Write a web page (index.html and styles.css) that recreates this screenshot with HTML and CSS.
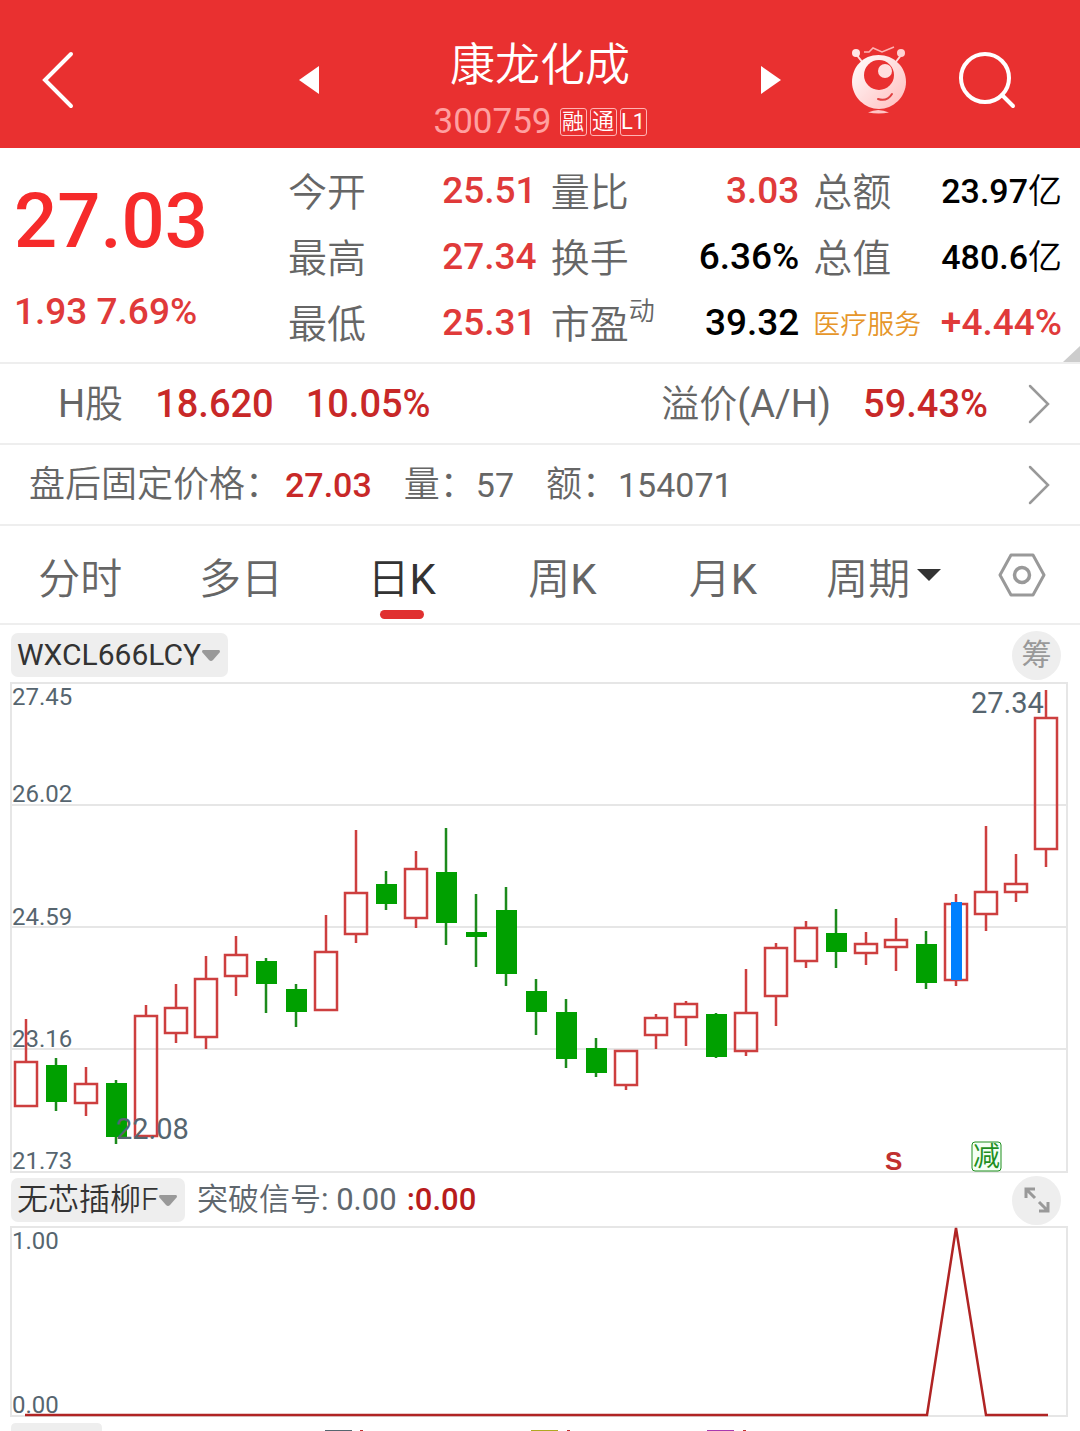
FILE: index.html
```html
<!DOCTYPE html>
<html lang="zh-CN">
<head>
  <meta charset="UTF-8" />
  <meta name="viewport" content="width=device-width, initial-scale=1.0"/>
  <title>康龙化成 300759</title>
  <link rel="stylesheet" href="styles.css">
</head>
<body>
  <header class="header">
    <div class="header-left">
      <button class="icon-btn" aria-label="返回">
        <svg width="32" height="58" viewBox="0 0 32 58"><path d="M29 3 3 29 29 55" fill="none" stroke="#fff" stroke-width="4" stroke-linecap="round"/></svg>
      </button>
      <button class="icon-btn" aria-label="上一只">
        <svg width="20" height="28" viewBox="0 0 20 28"><path d="M20 0v28L0 14z" fill="#fff"/></svg>
      </button>
    </div>
    <div class="header-title">
      <h1>康龙化成</h1>
      <div class="header-code">
        <span class="code">300759</span>
        <span class="tag">融</span>
        <span class="tag">通</span>
        <span class="tag en">L1</span>
      </div>
    </div>
    <div class="header-right">
      <button class="icon-btn" aria-label="下一只">
        <svg width="20" height="28" viewBox="0 0 20 28"><path d="M0 0v28L20 14z" fill="#fff"/></svg>
      </button>
      <button class="icon-btn robot" aria-label="智能助手">
        <svg width="56" height="68" viewBox="0 0 56 68">
          <defs>
            <linearGradient id="skin" x1="0" y1="0" x2="1" y2="1">
              <stop offset="0" stop-color="#fff"/>
              <stop offset="1" stop-color="#ffbcbc"/>
            </linearGradient>
          </defs>
          <path d="M5 8 12 17M51 8 44 17" stroke="#ffdcdc" stroke-width="2"/>
          <circle cx="5" cy="7" r="4" fill="#ffe6e6"/>
          <circle cx="50" cy="7" r="4" fill="#ffd2d2"/>
          <path d="M13 6h5l4-4 9 4 12-5" fill="none" stroke="#ffb4b4" stroke-width="1.5"/>
          <path d="M27.500 9C43 9 55 21 55 36 55 51 42 63 28 63S1 51 1 36C1 21 12 9 27.500 9z" fill="url(#skin)"/>
          <circle cx="28" cy="29" r="15" fill="#e93030"/>
          <circle cx="34" cy="25" r="7" fill="#ffdede"/>
          <path d="M27 53q9 3 14-5" fill="none" stroke="#e04040" stroke-width="2" stroke-linecap="round"/>
          <path d="M17 66.500q10-5 21 0-10 2-21 0z" fill="#ffc4c4"/>
        </svg>
      </button>
      <button class="icon-btn" aria-label="搜索">
        <svg width="58" height="58" viewBox="0 0 58 58"><g fill="none" stroke="#fff" stroke-width="4" stroke-linecap="round"><circle cx="27" cy="27" r="24"/><path d="M44 44 55 55"/></g></svg>
      </button>
    </div>
  </header>

  <section class="quote">
    <div class="price">
      <div class="price-now">27.03</div>
      <div class="price-change">1.93 7.69%</div>
    </div>
    <dl class="stats">
      <div class="stat"><dt>今开</dt><dd class="up">25.51</dd></div>
      <div class="stat"><dt>量比</dt><dd class="up">3.03</dd></div>
      <div class="stat"><dt>总额</dt><dd class="amount">23.97<span>亿</span></dd></div>
      <div class="stat"><dt>最高</dt><dd class="up">27.34</dd></div>
      <div class="stat"><dt>换手</dt><dd>6.36%</dd></div>
      <div class="stat"><dt>总值</dt><dd class="amount">480.6<span>亿</span></dd></div>
      <div class="stat"><dt>最低</dt><dd class="up">25.31</dd></div>
      <div class="stat"><dt>市盈<sup>动</sup></dt><dd>39.32</dd></div>
      <div class="stat"><dt class="sector">医疗服务</dt><dd class="up">+4.44%</dd></div>
    </dl>
    <svg class="corner" width="17" height="16" viewBox="0 0 17 16"><path d="M17 0v16H0z" fill="#ccc"/></svg>
  </section>

  <a class="row row-h" href="#">
    <span><span class="en">H</span>股</span>
    <b>18.620</b>
    <b>10.05%</b>
    <span class="push">溢价<span class="en">(A/H)</span></span>
    <b>59.43%</b>
    <svg class="arrow" width="22" height="40" viewBox="0 0 22 40"><path d="M2 2 20 20 2 38" fill="none" stroke="#999" stroke-width="2.500" stroke-linecap="round"/></svg>
  </a>
  <a class="row row-after" href="#">
    <span>盘后固定价格：<b>27.03</b></span>
    <span>量：<i>57</i></span>
    <span>额：<i>154071</i></span>
    <svg class="arrow push" width="22" height="40" viewBox="0 0 22 40"><path d="M2 2 20 20 2 38" fill="none" stroke="#999" stroke-width="2.500" stroke-linecap="round"/></svg>
  </a>

  <nav class="tabs">
    <button class="tab">分时</button>
    <button class="tab">多日</button>
    <button class="tab active"><span>日<span class="en">K</span></span></button>
    <button class="tab"><span>周<span class="en">K</span></span></button>
    <button class="tab"><span>月<span class="en">K</span></span></button>
    <button class="tab">周期<svg width="24" height="12" viewBox="0 0 24 12"><path d="M0 0h24L12 12z" fill="#333"/></svg></button>
    <button class="setting" aria-label="设置">
      <svg width="48" height="44" viewBox="0 0 48 44"><g fill="none" stroke="#999" stroke-linejoin="round"><path d="M13 2h22L46 22 35 42H13L2 22z" stroke-width="3"/><circle cx="24" cy="22" r="7.500" stroke-width="3.500"/></g></svg>
    </button>
  </nav>

  <div class="toolbar toolbar-main">
    <div class="picker en">
      <select aria-label="主图指标"><option>WXCL666LCY</option></select>
      <svg width="18" height="11" viewBox="0 0 18 11"><path d="M1 0h16q1 0 1 2L11 10q-2 2-4 0L0 2Q0 0 1 0z" fill="#999"/></svg>
    </div>
    <button class="round">筹</button>
  </div>
  <svg class="chart" id="kline" viewBox="0 0 1056 490">
    <g class="grid">
      <path d="M0 122H1056M0 244H1056M0 366H1056"/>
      <rect x="0" y="0" width="1056" height="489"/>
    </g>
    <g class="axis">
      <text x="1" y="22">27.45</text>
      <text x="1" y="119">26.02</text>
      <text x="1" y="242">24.59</text>
      <text x="1" y="364">23.16</text>
      <text x="1" y="486">21.73</text>
    </g>
    <g id="candles"></g>
    <rect x="940" y="219" width="11" height="78" fill="#0080ff"/>
    <g class="peak">
      <text x="960" y="30">27.34</text>
      <text x="105" y="456">22.08</text>
    </g>
    <text class="sell" x="874" y="487">S</text>
    <rect class="cut-box" x="961" y="459" width="29" height="29" rx="3"/>
    <text class="cut" x="962" y="483">减</text>
  </svg>

  <div class="toolbar">
    <div class="picker">
      <select aria-label="副图指标"><option>无芯插柳F</option></select>
      <svg width="18" height="11" viewBox="0 0 18 11"><path d="M1 0h16q1 0 1 2L11 10q-2 2-4 0L0 2Q0 0 1 0z" fill="#999"/></svg>
    </div>
    <span class="signal">突破信号<span class="en">: 0.00</span></span>
    <span class="signal-red">:0.00</span>
    <button class="round" aria-label="展开">
      <svg width="28" height="28" viewBox="0 0 28 28"><path d="M12 3H3v9M3 3l9 9M25 16v9h-9M25 25l-9-9" fill="none" stroke="#999" stroke-width="3"/></svg>
    </button>
  </div>
  <svg class="chart" viewBox="0 0 1056 190">
    <g class="grid"><rect x="0" y="0" width="1056" height="189"/></g>
    <g class="axis">
      <text x="1" y="22">1.00</text>
      <text x="1" y="186">0.00</text>
    </g>
    <path class="line" d="M14 188H916L945 1 975 188H1037"/>
  </svg>

  <!-- top edge of the next indicator row -->
  <svg class="next" viewBox="0 0 1080 15">
    <path d="M11 15v-4q0-5 5-5h81q5 0 5 5v4z" fill="#eee"/>
    <path d="M325 14h27" stroke="#56656f" stroke-width="2"/>
    <path d="M531 14h27" stroke="#b0a820" stroke-width="2"/>
    <path d="M707 14h27" stroke="#a83ab0" stroke-width="2"/>
    <path d="M360 14h3M567 14h3M743 14h3" stroke="#c03030" stroke-width="2"/>
  </svg>

  <script>
    // [high, body top, body bottom, low, up]
    const candles = [
      [336, 379, 423, 423, 1], [375, 382, 419, 428, 0], [384, 401, 420, 433, 1], [397, 400, 454, 461, 0],
      [322, 333, 453, 453, 1], [301, 325, 350, 360, 1], [273, 296, 354, 366, 1], [253, 272, 293, 313, 1],
      [275, 278, 301, 330, 0], [301, 306, 329, 344, 0], [232, 269, 327, 327, 1], [147, 210, 251, 260, 1],
      [188, 201, 221, 227, 0], [168, 186, 235, 245, 1], [145, 189, 240, 262, 0], [211, 249, 254, 284, 0],
      [204, 227, 291, 303, 0], [296, 308, 329, 352, 0], [316, 329, 376, 385, 0], [355, 365, 390, 394, 0],
      [368, 368, 402, 407, 1], [331, 335, 352, 366, 1], [318, 321, 334, 363, 1], [330, 331, 374, 375, 0],
      [286, 330, 368, 373, 1], [260, 265, 313, 343, 1], [238, 245, 278, 285, 1], [226, 250, 269, 285, 0],
      [249, 261, 270, 282, 1], [235, 257, 264, 288, 1], [248, 261, 300, 306, 0], [211, 221, 297, 303, 1],
      [143, 209, 231, 248, 1], [171, 201, 209, 219, 1], [7, 35, 166, 184, 1]
    ];
    const step = 30;
    let svg = "";
    candles.forEach(([high, top, bottom, low, up], i) => {
      const x = 15 + i * step;
      const cls = up ? "rise" : "fall";
      svg += `<path class="${cls}" d="M${x} ${high}V${top}M${x} ${bottom}V${low}"/>`;
      svg += up
        ? `<rect class="rise" x="${x - 11}" y="${top}" width="22" height="${bottom - top}"/>`
        : `<rect class="fall-body" x="${x - 10}" y="${top}" width="21" height="${bottom - top}"/>`;
    });
    document.getElementById("candles").innerHTML = svg;
  </script>
</body>
</html>
```
FILE: styles.css
```css
* {
  box-sizing: border-box;
}
body {
  margin: 0;
  background: #fff;
  color: #666;
  font-family: Roboto, "Noto Sans CJK SC", sans-serif;
  font-weight: 350;
}
button,
select {
  border: 0;
  padding: 0;
  background: none;
  color: inherit;
  font: inherit;
}
svg {
  display: block;
}
.en {
  font-weight: 400;
}

/* header */
.header {
  display: grid;
  grid-template-columns: 1fr auto 1fr;
  align-items: center;
  height: 148px;
  padding: 12px 42px 0;
  background: #e93030;
  color: #fff;
}
.header-left,
.header-right {
  display: flex;
  align-items: center;
  justify-content: space-between;
}
.header-left {
  padding-right: 114px;
}
.header-right {
  padding: 0 22px 0 114px;
}
.robot {
  margin-left: 20px;
}
.header-title {
  padding-top: 24px;
  text-align: center;
}
h1 {
  margin: 0;
  font-size: 45px;
  line-height: 60px;
  font-weight: 350;
}
.header-code {
  display: flex;
  align-items: center;
  gap: 3px;
}
.code {
  margin-right: 5px;
  color: #ffa0a0;
  font-size: 35px;
  line-height: 52px;
  font-weight: 400;
}
.tag {
  width: 27px;
  height: 28px;
  border: 1px solid #ffb4b4;
  border-radius: 3px;
  font-size: 22px;
  line-height: 26px;
}

/* quote */
.quote {
  position: relative;
  display: flex;
  height: 216px;
  padding: 10px 18px 0 14px;
  border-bottom: 2px solid #eee;
}
.price {
  flex: 0 0 274px;
  color: #e03a3a;
  font-weight: 500;
}
.price-now {
  padding-top: 18px;
  color: #f62b2b;
  font-size: 76px;
  line-height: 90px;
}
.price-change {
  padding-top: 22px;
  font-size: 37px;
  line-height: 48px;
}
.stats {
  flex: 1;
  display: grid;
  grid-template-columns: repeat(3, 1fr);
  grid-auto-rows: 66px;
  column-gap: 14px;
  margin: 0;
}
.stat {
  display: flex;
  align-items: center;
  justify-content: space-between;
  font-size: 37px;
  line-height: 66px;
  white-space: nowrap;
}
.stat dt {
  padding-top: 3px;
  font-size: 39px;
}
.stat dd {
  margin: 0;
  color: #000;
  font-weight: 500;
}
.stat .up {
  color: #e03a3a;
}
.stat .amount {
  font-size: 34px;
}
.amount span {
  font-weight: 350;
}
.stat .sector {
  color: #e6962a;
  font-size: 27px;
}
sup {
  font-size: 26px;
  line-height: 0;
  vertical-align: 18px;
}
.corner {
  position: absolute;
  right: 0;
  bottom: 0;
}

/* link rows */
.row {
  display: flex;
  align-items: center;
  gap: 32px;
  height: 81px;
  padding-right: 30px;
  border-bottom: 2px solid #eee;
  color: #666;
  line-height: 48px;
  text-decoration: none;
}
.row b {
  color: #c82828;
  font-weight: 500;
}
.row i {
  font-style: normal;
  font-weight: 400;
}
.row .push {
  margin-left: auto;
}
.row-h {
  padding-left: 58px;
  font-size: 38px;
}
.row-h .arrow {
  margin-left: 8px;
}
.row-after {
  padding-left: 29px;
  font-size: 36px;
}
.row-after b,
.row-after i {
  font-size: 34px;
}
.row-after b {
  margin-left: 4px;
}

/* period tabs */
.tabs {
  display: flex;
  height: 99px;
  border-bottom: 2px solid #eee;
}
.tab {
  position: relative;
  flex: 1;
  display: flex;
  align-items: center;
  justify-content: center;
  gap: 7px;
  padding-top: 10px;
  font-size: 42px;
  line-height: 60px;
}
.tab.active {
  color: #333;
}
.tab.active::after {
  content: "";
  position: absolute;
  bottom: 4px;
  width: 44px;
  height: 9px;
  border-radius: 5px;
  background: #e03030;
}
.tab svg {
  margin-bottom: 10px;
}
.setting {
  flex: 0 0 116px;
  display: flex;
  align-items: center;
  justify-content: center;
}

/* indicators */
.toolbar {
  display: flex;
  align-items: center;
  height: 54px;
  padding: 0 19px 0 11px;
  color: #5f676e;
  font-size: 31px;
  line-height: 44px;
}
.toolbar-main {
  height: 58px;
  padding-top: 2px;
}
.picker {
  display: flex;
  align-items: center;
  height: 44px;
  padding: 0 8px 0 6px;
  border-radius: 7px;
  background: #eee;
  color: #333;
}
.picker.en {
  font-size: 30px;
}
.picker select {
  appearance: none;
  height: 44px;
}
.signal {
  margin: 0 10px 0 12px;
}
.signal-red {
  color: #b81c1c;
  font-weight: 500;
}
.round {
  display: flex;
  align-items: center;
  justify-content: center;
  width: 49px;
  height: 49px;
  margin-left: auto;
  border-radius: 50%;
  background: #eee;
  color: #999;
  font-size: 30px;
  font-weight: 400;
}

/* charts */
.chart {
  width: calc(100% - 24px);
  margin-left: 11px;
  overflow: visible;
}
.grid {
  fill: none;
  stroke: #e6e6e6;
  stroke-width: 2;
}
.axis,
.peak {
  fill: #56656f;
  font-size: 24px;
  font-weight: 400;
}
.peak {
  font-size: 29px;
}
.rise {
  fill: none;
  stroke: #cd3f3f;
  stroke-width: 2.5;
}
.fall {
  stroke: #1c8a1c;
  stroke-width: 2.5;
}
.fall-body {
  fill: #00a000;
}
.sell {
  fill: #c03030;
  font-family: "Liberation Sans", sans-serif;
  font-size: 26px;
  font-weight: 700;
}
.cut {
  fill: #1f8f1f;
  font-size: 27px;
  font-weight: 400;
}
.cut-box {
  fill: #f4fff4;
  stroke: #1f8f1f;
}
.line {
  fill: none;
  stroke: #b02424;
  stroke-width: 2.5;
}
.next {
  width: 100%;
}
```
